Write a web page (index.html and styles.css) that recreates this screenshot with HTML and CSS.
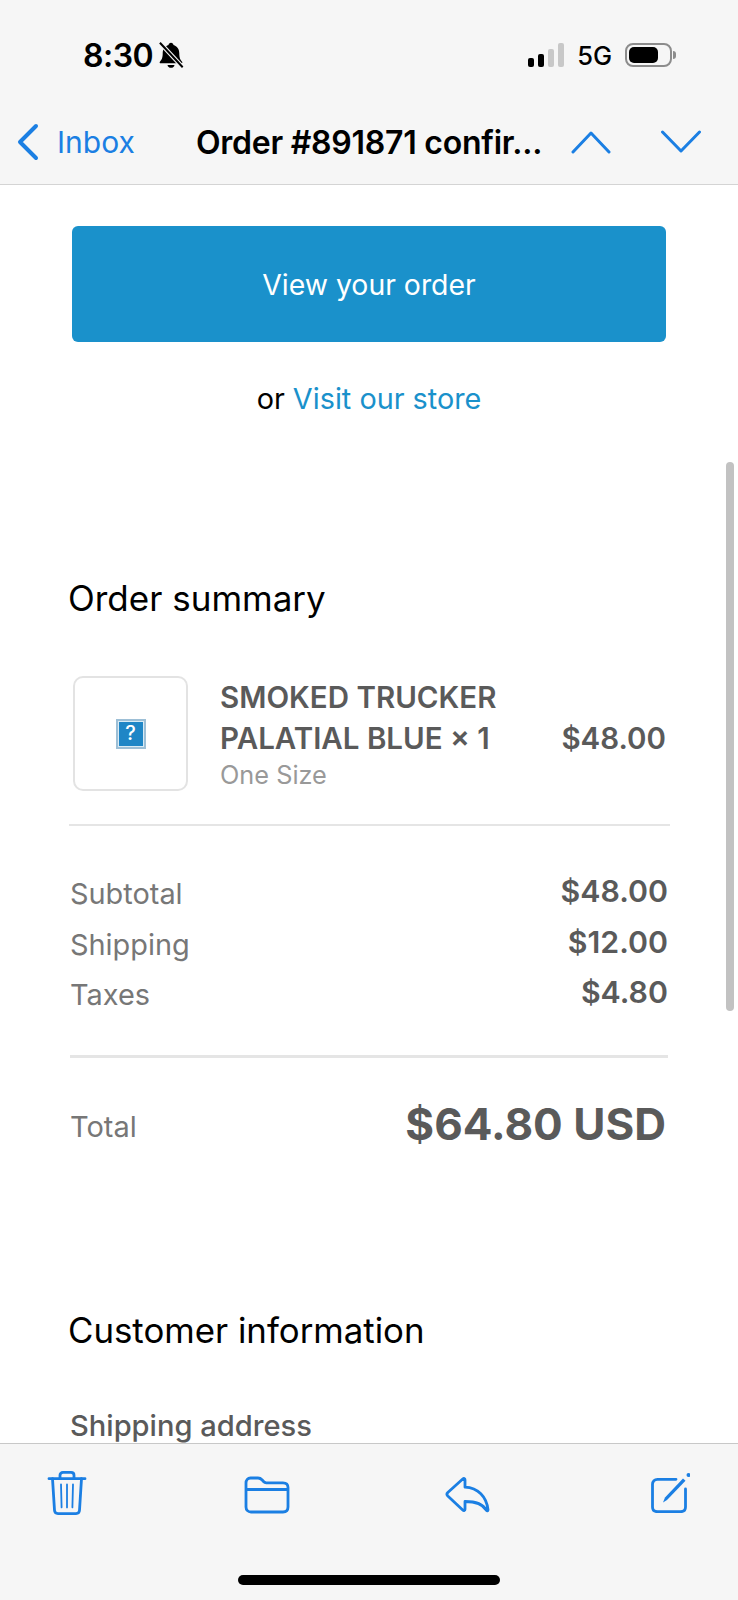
FILE: index.html
```html
<!DOCTYPE html>
<html lang="en">
<head>
    <meta charset="utf-8">
    <meta content="width=device-width, initial-scale=1.0" name="viewport">
    <title>Order #891871 confirmed</title>
    <link rel="stylesheet" href="styles.css">
</head>
<body>
<div class="phone">

    <!-- status bar + mail nav -->
    <header class="top-bar">
        <div class="status-bar">
            <div class="status-left">
                <span class="clock">8:30</span>
                <svg class="bell" width="26" height="28" viewBox="2 1 22 24">
                    <path d="M13 2.500c1.200 0 2 .8 2.100 1.900 3.100.9 5 3.500 5 7 0 4.100 1 5.800 2.400 7.300.5.6.2 1.300-.6 1.300H4.100c-.8 0-1.100-.7-.6-1.300C4.900 17.200 5.900 15.500 5.900 11.400c0-3.500 1.900-6.100 5-7C11 3.300 11.800 2.500 13 2.500z" fill="#000"/>
                    <path d="M10 21.500h6c-.2 1.500-1.400 2.500-3 2.500s-2.800-1-3-2.500z" fill="#000"/>
                    <path d="M3.500 2.500l19.500 21" stroke="#f6f6f6" stroke-width="3.600"/>
                    <path d="M3.500 2.500l19.500 21" stroke="#000" stroke-width="1.700"/>
                </svg>
            </div>
            <div class="status-right">
                <div class="signal">
                    <span class="signal-bar bar-1"></span>
                    <span class="signal-bar bar-2"></span>
                    <span class="signal-bar bar-3 off"></span>
                    <span class="signal-bar bar-4 off"></span>
                </div>
                <span class="network">5G</span>
                <div class="battery"><span class="battery-level"></span></div>
                <span class="battery-tip"></span>
            </div>
        </div>
        <nav class="mail-nav">
            <div class="back">
                <svg width="24" height="38" viewBox="0 0 24 38">
                    <path d="M21 3L5 19l16 16" fill="none" stroke="#1b7fe3" stroke-width="4" stroke-linecap="round" stroke-linejoin="round"/>
                </svg>
                <span>Inbox</span>
            </div>
            <div class="mail-title">Order #891871 confir...</div>
            <div class="arrows">
                <svg width="42" height="24" viewBox="0 0 42 24">
                    <path d="M3 22L21 3l18 19" fill="none" stroke="#1b7fe3" stroke-width="3" stroke-linecap="round" stroke-linejoin="round"/>
                </svg>
                <svg width="42" height="24" viewBox="0 0 42 24">
                    <path d="M2.500 2L21 21 39.500 2" fill="none" stroke="#1b7fe3" stroke-width="3" stroke-linecap="round" stroke-linejoin="round"/>
                </svg>
            </div>
        </nav>
    </header>

    <!-- mail body -->
    <main class="mail-body">
        <div class="scroll-thumb"></div>

        <a href="#" class="order-button">View your order</a>
        <p class="store-line">or <a href="#">Visit our store</a></p>

        <h2 class="summary-title">Order summary</h2>

        <div class="item-row">
            <div class="thumb">
                <span class="broken-image">?</span>
            </div>
            <div class="item-info">
                <div class="item-name">SMOKED TRUCKER<br>PALATIAL BLUE × 1</div>
                <div class="item-size">One Size</div>
            </div>
            <div class="item-price">$48.00</div>
        </div>

        <div class="costs">
            <div class="cost-row"><span>Subtotal</span><strong>$48.00</strong></div>
            <div class="cost-row"><span>Shipping</span><strong>$12.00</strong></div>
            <div class="cost-row"><span>Taxes</span><strong>$4.80</strong></div>
        </div>

        <div class="total-row">
            <span>Total</span>
            <strong>$64.80 USD</strong>
        </div>

        <h2 class="customer-title">Customer information</h2>
        <h3 class="address-title">Shipping address</h3>
    </main>

    <!-- toolbar -->
    <footer class="toolbar">
        <div class="tools">
            <svg width="40" height="46" viewBox="0 0 40 48" preserveAspectRatio="none">
                <g fill="none" stroke="#1b7fe3" stroke-linecap="round" stroke-linejoin="round">
                    <path d="M2 9h36" stroke-width="2.800"/>
                    <path d="M13 9V5.500C13 3.500 14.200 2.500 16 2.500h8c1.800 0 3 1 3 3V9" stroke-width="2.800"/>
                    <path d="M5.500 9l2 33c.1 2 1.300 3.500 3.500 3.500h18c2.200 0 3.400-1.500 3.500-3.500l2-33" stroke-width="2.800"/>
                    <path d="M14 15l.6 24M20 15v24M26 15l-.6 24" stroke-width="1.800"/>
                </g>
            </svg>
            <svg width="46" height="38" viewBox="0 0 46 38" class="tool-folder">
                <path d="M2 7c0-3 1.800-5 4.500-5h7.500c2 0 3 .7 4.200 2l1.300 1.500c.8.900 1.500 1.300 2.700 1.300H39c3 0 5 1.800 5 4.700V31c0 3-1.900 5-5 5H7c-3 0-5-2-5-5zM2 13.500h42" fill="none" stroke="#1b7fe3" stroke-width="2.800" stroke-linejoin="round"/>
            </svg>
            <svg width="46" height="37" viewBox="0 0 46 37" class="tool-reply">
                <path d="M18 2.800c.8-.8 2-.3 2 .9v7.500c13 .6 21.500 9.500 23 22.500.1 1.300-1.200 1.600-1.800.5C38 28 30 25.500 20 25.500v7.800c0 1.200-1.200 1.700-2 .9L2.800 20c-1-1-1-2.500 0-3.500z" fill="none" stroke="#1b7fe3" stroke-width="2.800" stroke-linejoin="round"/>
            </svg>
            <svg width="40" height="41" viewBox="0 0 40 41" class="tool-compose">
                <path d="M26 7.300H7.500c-3 0-5 2-5 5V35c0 3 2 4.700 5 4.700h23c3 0 5-1.700 5-4.700V17" fill="none" stroke="#1b7fe3" stroke-width="2.800" stroke-linecap="round"/>
                <path d="M13 30.500l2-5L33 6.500l2.500 2.300L17 28z" fill="#1b7fe3"/>
                <circle cx="38.500" cy="3" r="2" fill="#1b7fe3"/>
            </svg>
        </div>
        <div class="home-bar"></div>
    </footer>

</div>
</body>
</html>
```

FILE: styles.css
```css
* {
    box-sizing: border-box;
}

body {
    font-family: Inter, "Liberation Sans", sans-serif;
    margin: 0;
    padding: 0;
    background-color: #fff;
}

.phone {
    display: flex;
    flex-direction: column;
    width: 738px;
    height: 1600px;
    overflow: hidden;
}

/* top of the screen */
.top-bar {
    flex: 0 0 185px;
    background-color: #f6f6f6;
    border-bottom: 1px solid #d4d4d4;
}

.status-bar {
    display: flex;
    justify-content: space-between;
    align-items: center;
    height: 110px;
    padding: 0 62px 0 83px;
}

.status-left {
    display: flex;
    align-items: center;
    gap: 5px;
}

.clock {
    font-size: 32px;
    font-weight: 600;
    color: #000;
    letter-spacing: -0.5px;
}

.status-right {
    display: flex;
    align-items: center;
}

.signal {
    display: flex;
    align-items: flex-end;
    gap: 4px;
    margin-right: 13px;
    height: 24px;
}

.signal-bar {
    width: 6px;
    border-radius: 2px;
    background-color: #000;
}

.signal-bar.off {
    background-color: #c8c8c8;
}

.bar-1 { height: 9px; }
.bar-2 { height: 13px; }
.bar-3 { height: 18px; }
.bar-4 { height: 24px; }

.network {
    font-size: 25.500px;
    font-weight: 500;
    color: #000;
    margin-right: 13px;
}

.battery {
    width: 47px;
    height: 24px;
    padding: 2px;
    border: 2px solid #8c8c8c;
    border-radius: 8px;
}

.battery-level {
    display: block;
    width: 29px;
    height: 16px;
    background-color: #000;
    border-radius: 5px;
}

.battery-tip {
    width: 3px;
    height: 8px;
    margin-left: 1px;
    background-color: #8c8c8c;
    border-radius: 0 3px 3px 0;
}

.mail-nav {
    display: flex;
    align-items: center;
    height: 64px;
    padding: 0 36px 0 15px;
}

.back {
    display: flex;
    align-items: center;
    gap: 18px;
    width: 181px;
    font-size: 30px;
    color: #1b7fe3;
}

.mail-title {
    flex: 1;
    font-size: 32px;
    font-weight: 600;
    color: #000;
    white-space: nowrap;
    letter-spacing: -0.25px;
}

.arrows {
    display: flex;
    gap: 48px;
}

/* mail content */
.mail-body {
    position: relative;
    flex: 1;
    overflow: hidden;
    background-color: #fff;
    padding: 41px 72px 0 69px;
}

.scroll-thumb {
    position: absolute;
    left: 726px;
    top: 277px;
    width: 8px;
    height: 549px;
    border-radius: 4px;
    background-color: #c2c2c2;
}

.order-button {
    display: block;
    margin-left: 3px;
    height: 116px;
    line-height: 117px;
    text-align: center;
    font-size: 28.400px;
    color: #fff;
    text-decoration: none;
    background-color: #1a91cb;
    border-radius: 6px;
}

.store-line {
    margin: 37px 0 0;
    padding-left: 3px;
    text-align: center;
    font-size: 28.800px;
    line-height: 40px;
    color: #000;
}

.store-line a {
    color: #1a91cb;
    text-decoration: none;
}

.summary-title {
    margin: 157px 0 0 -1px;
    font-size: 35px;
    line-height: 44px;
    font-weight: 400;
    color: #000;
}

.item-row {
    display: flex;
    align-items: center;
    margin: 55px -4px 0 0;
    padding: 0 4px 32px 4px;
    border-bottom: 2px solid #e5e5e5;
}

.thumb {
    display: flex;
    align-items: center;
    justify-content: center;
    width: 115px;
    height: 115px;
    border: 2px solid #e3e3e3;
    border-radius: 10px;
    margin-right: 32px;
}

.broken-image {
    width: 30px;
    height: 30px;
    line-height: 25px;
    text-align: center;
    font-size: 20px;
    font-weight: 500;
    color: #fff;
    background-color: #1f86c6;
    border: 2px solid #9dbfd6;
    box-shadow: inset 0 0 0 1px #d9ebf5;
}

.item-info {
    flex: 1;
    padding-top: 2px;
}

.item-name {
    font-size: 29.500px;
    line-height: 41px;
    font-weight: 600;
    color: #5a5a5a;
}

.item-size {
    margin-top: -1px;
    font-size: 25.300px;
    line-height: 34px;
    color: #999;
}

.item-price {
    padding-top: 9px;
    font-size: 29.500px;
    font-weight: 600;
    color: #5a5a5a;
}

.costs {
    margin: 0 -2px 0 1px;
    padding: 46px 0 31px;
    border-bottom: 3px solid #e5e5e5;
}

.cost-row {
    display: flex;
    justify-content: space-between;
    height: 50.500px;
    font-size: 28.900px;
    line-height: 44px;
    color: #777;
}

.cost-row strong {
    color: #5a5a5a;
    font-size: 30.300px;
    font-weight: 600;
    line-height: 38px;
}

.total-row {
    display: flex;
    justify-content: space-between;
    align-items: center;
    padding: 39px 0 0 1px;
    font-size: 29px;
    color: #777;
}

.total-row span {
    padding-top: 6px;
}

.total-row strong {
    font-size: 44px;
    font-weight: 700;
    color: #5a5a5a;
}

.customer-title {
    margin: 157px 0 0 -1px;
    font-size: 34.800px;
    line-height: 44px;
    font-weight: 400;
    color: #000;
}

.address-title {
    margin: 54px 0 0 1px;
    font-size: 29.100px;
    line-height: 40px;
    font-weight: 500;
    color: #5a5a5a;
}

/* bottom toolbar */
.toolbar {
    flex: 0 0 157px;
    background-color: #f6f6f6;
    border-top: 1px solid #c8c8c8;
}

.tools {
    display: flex;
    justify-content: space-between;
    align-items: flex-start;
    height: 131px;
    padding: 26px 48px 0 47px;
}

.tool-folder { margin-top: 6px; }
.tool-reply { margin: 6px 2px 0 -2px; }
.tool-compose { margin-top: 2px; }

.home-bar {
    width: 262px;
    height: 10px;
    margin: 0 auto;
    border-radius: 5px;
    background-color: #000;
}
```
